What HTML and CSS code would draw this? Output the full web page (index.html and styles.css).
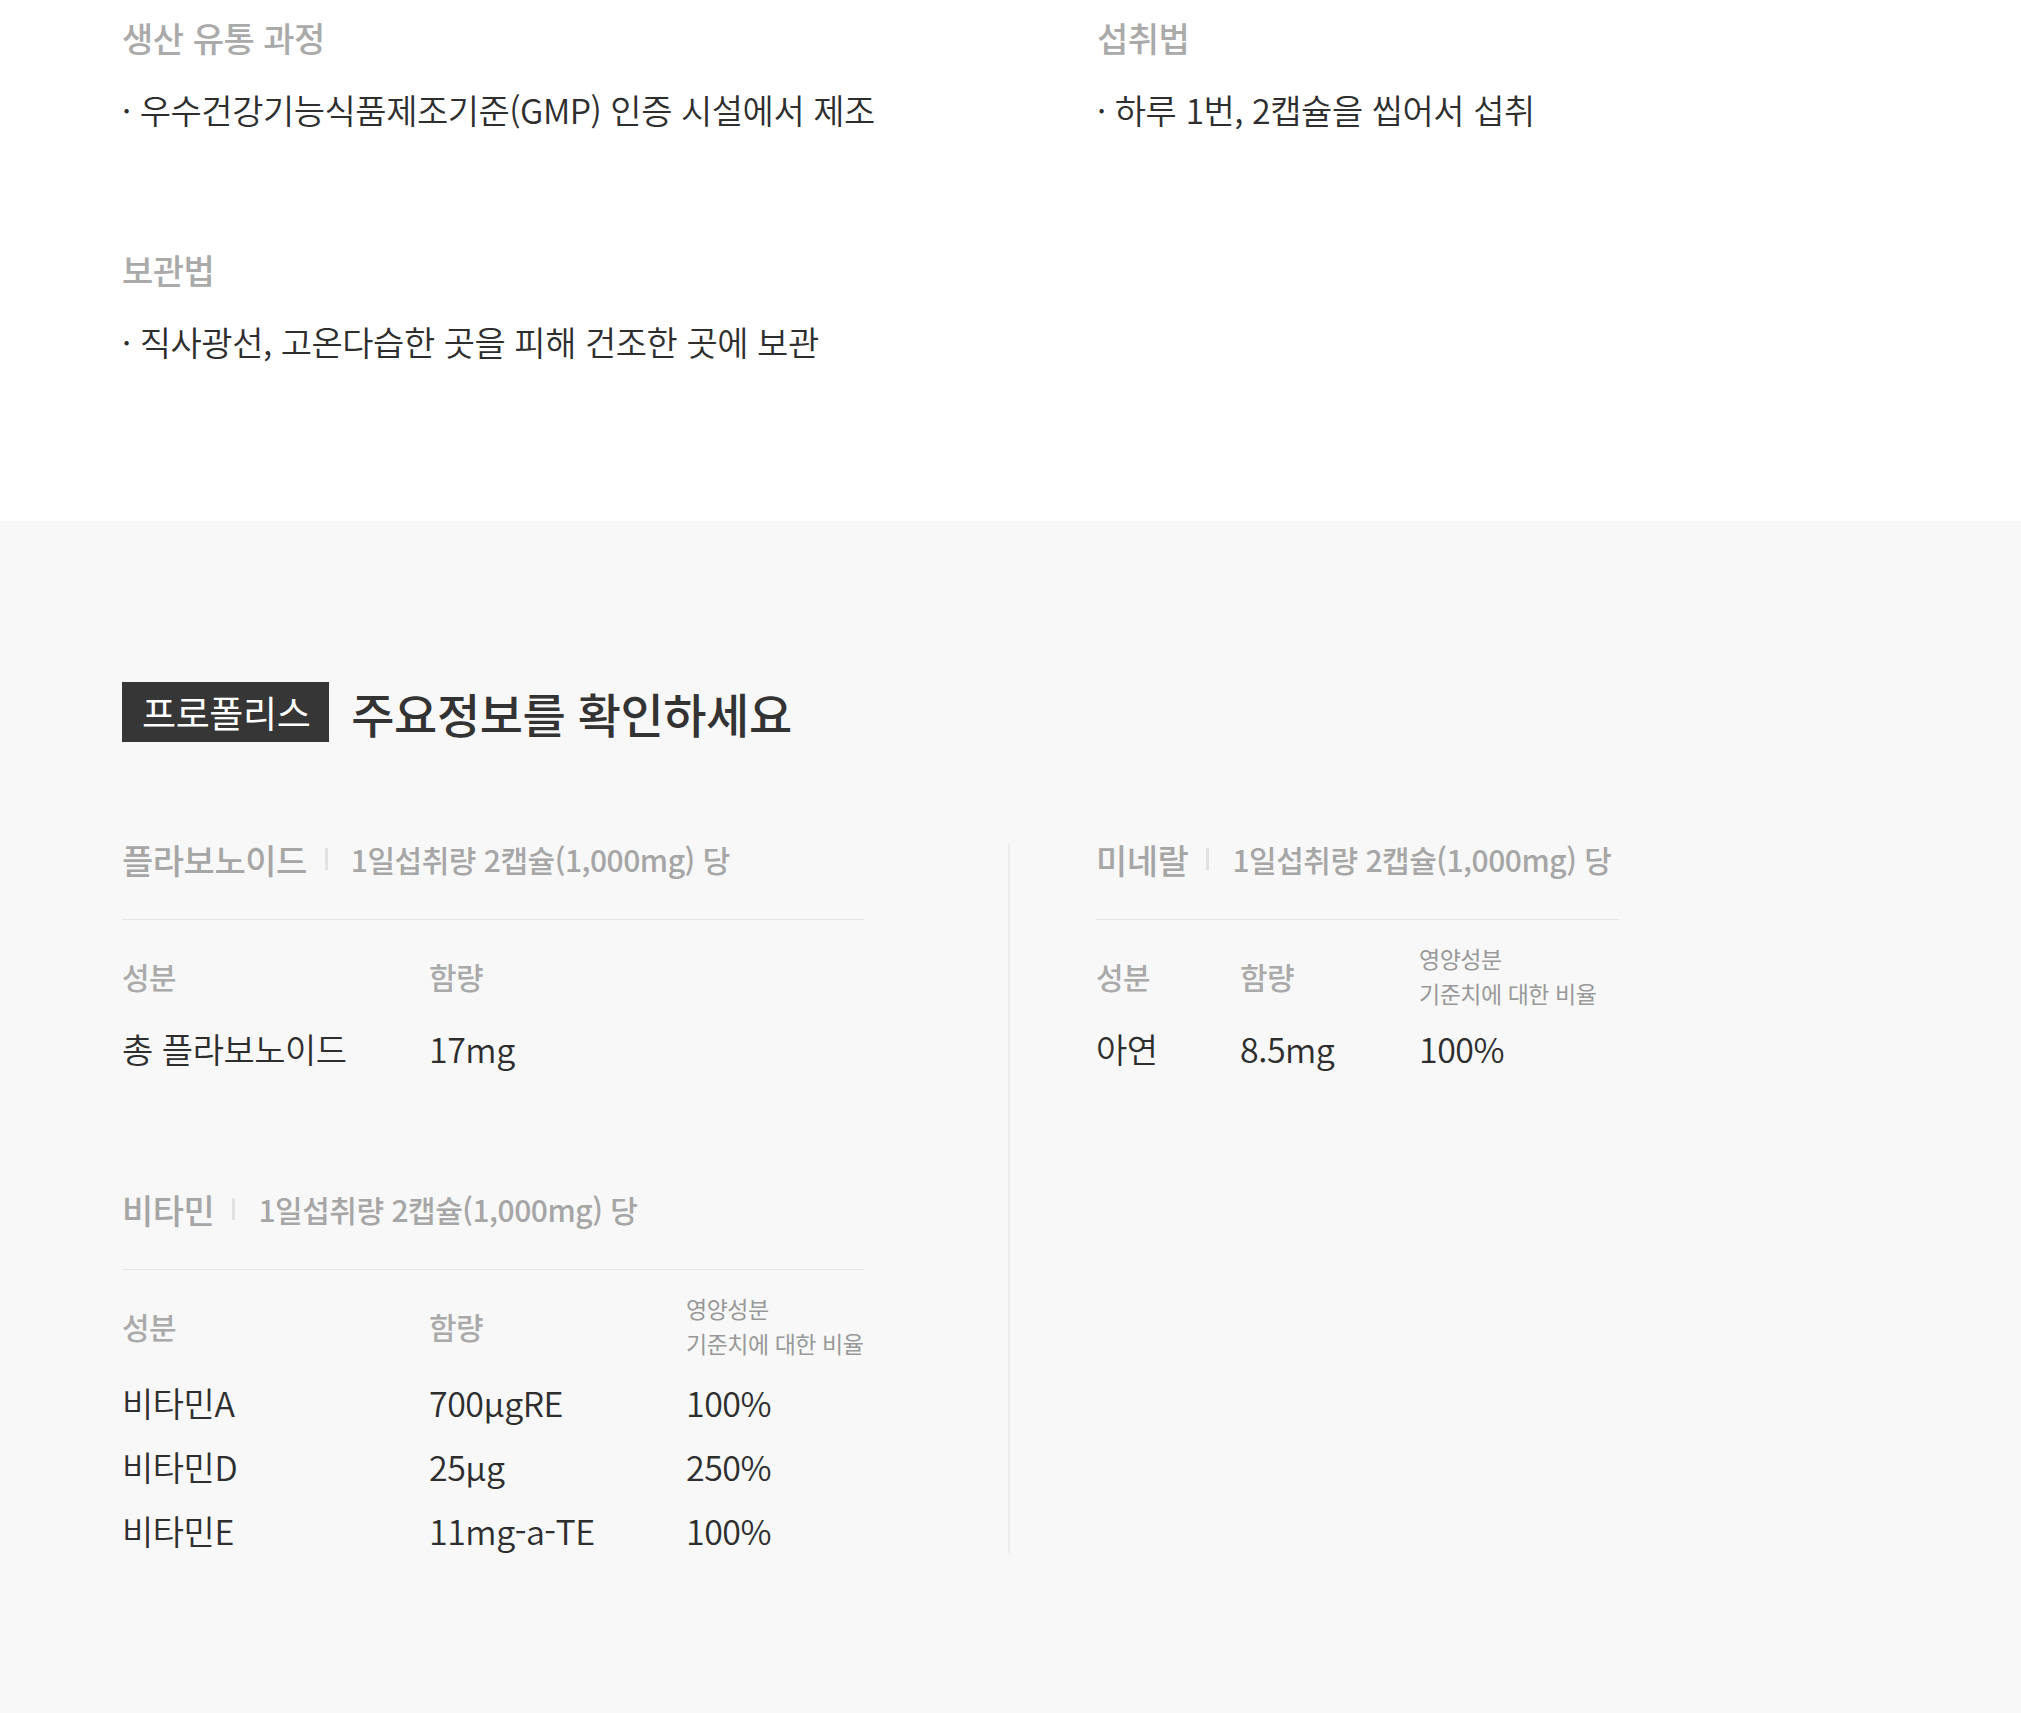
FILE: index.html
```html
<!DOCTYPE html>
<html lang="ko">
<head>
<meta charset="UTF-8" />
<meta name="viewport" content="width=device-width, initial-scale=1" />
<title>프로폴리스 제품정보</title>
<link rel="stylesheet" href="styles.css">
</head>
<body>

<section class="info">
  <div class="inner info-grid">
    <div class="info-item">
      <h3>생산 유통 과정</h3>
      <p>· 우수건강기능식품제조기준(GMP) 인증 시설에서 제조</p>
    </div>
    <div class="info-item">
      <h3>섭취법</h3>
      <p>· 하루 1번, 2캡슐을 씹어서 섭취</p>
    </div>
    <div class="info-item">
      <h3>보관법</h3>
      <p>· 직사광선, 고온다습한 곳을 피해 건조한 곳에 보관</p>
    </div>
  </div>
</section>

<section class="nutri">
  <div class="inner">
    <h2 class="nutri-title"><span class="tag">프로폴리스</span>주요정보를 확인하세요</h2>

    <div class="nutri-cols">
      <div class="col col-left">
        <div class="block">
          <div class="block-head">
            <strong>플라보노이드</strong><span class="bar"></span><span>1일섭취량 2캡슐(1,000mg) 당</span>
          </div>
          <table class="tbl tbl-left">
            <colgroup><col class="c1"><col class="c2"><col class="c3"></colgroup>
            <thead>
              <tr><th>성분</th><th>함량</th><th></th></tr>
            </thead>
            <tbody>
              <tr><td>총 플라보노이드</td><td>17mg</td><td></td></tr>
            </tbody>
          </table>
        </div>

        <div class="block">
          <div class="block-head">
            <strong>비타민</strong><span class="bar"></span><span>1일섭취량 2캡슐(1,000mg) 당</span>
          </div>
          <table class="tbl tbl-left tbl-vitamin">
            <colgroup><col class="c1"><col class="c2"><col class="c3"></colgroup>
            <thead>
              <tr><th>성분</th><th>함량</th><th class="small">영양성분<br>기준치에 대한 비율</th></tr>
            </thead>
            <tbody>
              <tr><td>비타민A</td><td>700µgRE</td><td>100%</td></tr>
              <tr><td>비타민D</td><td>25µg</td><td>250%</td></tr>
              <tr><td>비타민E</td><td>11mg-a-TE</td><td>100%</td></tr>
            </tbody>
          </table>
        </div>
      </div>

      <div class="col col-right">
        <div class="block">
          <div class="block-head">
            <strong>미네랄</strong><span class="bar"></span><span>1일섭취량 2캡슐(1,000mg) 당</span>
          </div>
          <table class="tbl tbl-right">
            <colgroup><col class="c1"><col class="c2"><col class="c3"></colgroup>
            <thead>
              <tr><th>성분</th><th>함량</th><th class="small">영양성분<br>기준치에 대한 비율</th></tr>
            </thead>
            <tbody>
              <tr><td>아연</td><td>8.5mg</td><td>100%</td></tr>
            </tbody>
          </table>
        </div>
      </div>
    </div>
  </div>
</section>

</body>
</html>
```

FILE: styles.css
```css
* {
  box-sizing: border-box;
  margin: 0;
  padding: 0;
}

body {
  font-family: "Noto Sans CJK KR", "Noto Sans", sans-serif;
  color: #333;
  background: #fff;
  letter-spacing: -0.03em;
}

.inner {
  padding-left: 122px;
  padding-right: 122px;
}

/* 상단 제품 정보 */
.info {
  padding: 16px 0 157px;
}

.info-grid {
  display: grid;
  grid-template-columns: 975px 1fr;
  row-gap: 116px;
}

.info-item h3 {
  font-size: 34px;
  line-height: 44px;
  font-weight: 500;
  color: #aaa;
  margin-bottom: 28px;
}

.info-item p {
  font-size: 34px;
  line-height: 44px;
  font-weight: 350;
  color: #2e2e2e;
}

/* 주요정보 */
.nutri {
  background: #f8f8f8;
  padding: 161px 0 200px;
}

.nutri-title {
  display: flex;
  align-items: center;
  height: 60px;
  font-size: 47px;
  font-weight: 500;
  color: #333;
}

.nutri-title .tag {
  display: inline-block;
  height: 60px;
  line-height: 60px;
  padding: 0 19px 0 20px;
  margin-right: 22px;
  background: #363636;
  color: #fff;
  font-size: 37px;
  font-weight: 400;
  letter-spacing: -0.01em;
}

.nutri-cols {
  display: grid;
  grid-template-columns: 888px 1fr;
  margin-top: 101px;
}

.col-left {
  border-right: 2px solid #ececec;
}

.col-right {
  padding-left: 86px;
}

.block + .block {
  margin-top: 122px;
}

.block-head {
  display: flex;
  align-items: center;
  height: 32px;
  box-sizing: content-box;
  padding-bottom: 44px;
  border-bottom: 1px solid #e6e6e6;
  color: #a6a6a6;
  font-size: 30px;
  font-weight: 500;
  white-space: nowrap;
}

.col-left .block-head {
  width: 742px;
}

.col-right .block-head {
  width: 523px;
}

.block-head strong {
  font-size: 34px;
  font-weight: 500;
}

.block-head .bar {
  width: 3px;
  height: 22px;
  background: #e2e2e2;
  margin: 0 23px 0 18px;
}

.tbl {
  border-collapse: collapse;
  table-layout: fixed;
  text-align: left;
}

.tbl-left {
  width: 742px;
}

.tbl-left .c1 { width: 307px; }
.tbl-left .c2 { width: 257px; }
.tbl-left .c3 { width: 178px; }

.tbl-right {
  width: 523px;
}

.tbl-right .c1 { width: 144px; }
.tbl-right .c2 { width: 179px; }
.tbl-right .c3 { width: 200px; }

.tbl th {
  height: 91px;
  padding: 21px 0 0;
  font-size: 30px;
  font-weight: 500;
  color: #aaa;
  vertical-align: middle;
  white-space: nowrap;
}

.tbl th.small {
  font-size: 23px;
  line-height: 35px;
  font-weight: 400;
  color: #999;
}

.tbl td {
  font-size: 34px;
  line-height: 44px;
  padding: 16px 0 0;
  font-weight: 350;
  color: #2e2e2e;
  vertical-align: middle;
  white-space: nowrap;
}

.tbl tbody tr + tr td {
  padding-top: 20px;
}

.tbl-vitamin tbody tr:first-child td {
  padding-top: 20px;
}
```
